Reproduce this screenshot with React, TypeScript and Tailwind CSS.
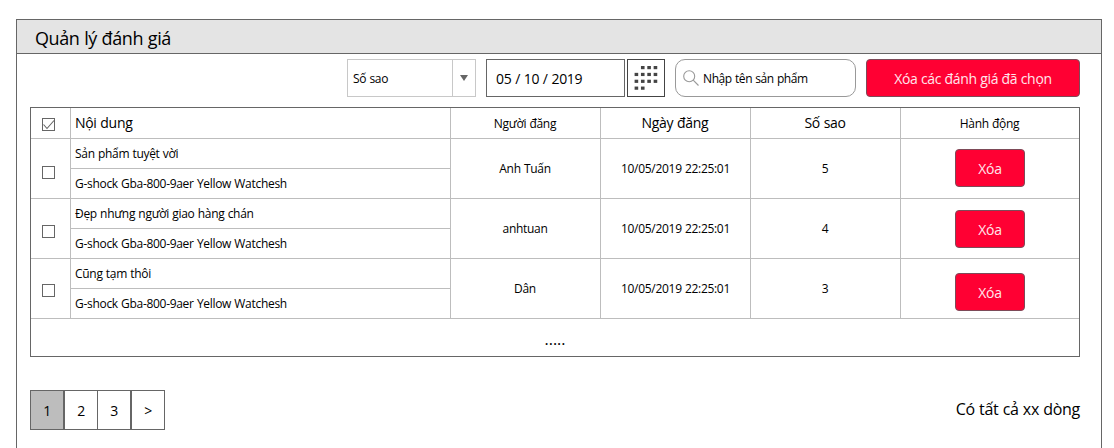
import React from "react";

function Checkbox({ checked, className }: { checked?: boolean; className: string }) {
  return (
    <svg viewBox="0 0 13 13" className={`ml-[11px] block h-[13px] w-[13px] shrink-0 ${className}`} role="checkbox" aria-checked={!!checked}>
      <rect x=".5" y=".5" width="12" height="12" fill="#fff" stroke="#666" />
      {checked && <path d="M1.5 6.5 5 10.5 12 2.5" fill="none" stroke="#666" strokeWidth="1.1" />}
    </svg>
  );
}

const rows = [
  { text: "Sản phẩm tuyệt vời", user: "Anh Tuấn", stars: 5, box: "mt-[27px]", btn: "mt-[10px]" },
  { text: "Đẹp nhưng người giao hàng chán", user: "anhtuan", stars: 4, box: "mt-[26px]", btn: "mt-[11px]" },
  { text: "Cũng tạm thôi", user: "Dân", stars: 3, box: "mt-[25px]", btn: "mt-[14px]" },
];

const dots = [
  [1, 0], [2, 0], [3, 0],
  [0, 1], [1, 1], [2, 1], [3, 1],
  [0, 2], [1, 2], [2, 2], [3, 2],
  [0, 3], [1, 3],
];

const grid = "grid grid-cols-[40px_380px_150px_150px_150px_178px]";
const cell = "flex items-center justify-center border-r border-[#bdbdbd]";
const redButton = "flex h-[38px] items-center justify-center rounded-[4px] border border-[#7d4a58] bg-[#ff0033] pt-[2px] text-[#ffe6eb]";

export default function App() {
  return (
    <main className="h-[448px] overflow-hidden bg-white pl-4 pt-[19px] font-['Open_Sans','Noto_Sans',sans-serif] text-xs tracking-[-0.3px] whitespace-nowrap text-black [word-spacing:0.4px]">
      <section className="h-[460px] w-[1086px] border border-[#666]">
        <header className="flex h-[34px] items-center border-b border-[#666] bg-[#e4e4e4] pl-[18px] pt-[2px]">
          <h1 className="text-[18px] tracking-[-0.4px]">Quản lý đánh giá</h1>
        </header>

        <div className="ml-[13px] mt-[5px] flex w-[1050px] justify-end">
          <div className="flex h-[38px] w-[129px] border border-[#c8c8c8]">
            <div className="flex flex-1 items-center border-r border-[#c8c8c8] pl-[5px] pt-[2px]">Số sao</div>
            <div className="flex w-[22px] items-center justify-center">
              <svg viewBox="0 0 8 6" className="h-[6px] w-[8px]"><path d="M0 0H8L4 6Z" fill="#666" /></svg>
            </div>
          </div>
          <div className="ml-[10px] flex h-[38px] w-[139px] items-center border border-[#666] pl-[9px] pt-[2px]">
            <span className="text-[14px]">05 / 10 / 2019</span>
          </div>
          <button className="ml-[2px] h-[38px] w-[38px] border border-[#444]" aria-label="Lịch">
            <svg viewBox="0 0 36 36" className="block h-9 w-9">
              {dots.map(([c, r]) => <rect key={`${c}-${r}`} x={6.6 + c * 6.35} y={6 + r * 6.85} width="3.6" height="3.2" fill="#444" />)}
            </svg>
          </button>
          <div className="ml-[10px] flex h-[38px] w-[181px] items-center rounded-[10px] border border-[#999] pl-[7px]">
            <svg viewBox="0 0 16 16" className="h-4 w-4" fill="none" stroke="#999" strokeWidth="1.1">
              <circle cx="6.2" cy="6.2" r="5.5" /><path d="m10.2 10.2 5.3 5.3" />
            </svg>
            <span className="ml-[4px] pt-[2px] tracking-[-0.4px]">Nhập tên sản phẩm</span>
          </div>
          <button className={`${redButton} ml-[10px] w-[214px]`}>
            <span className="text-[14px]">Xóa các đánh giá đã chọn</span>
          </button>
        </div>

        <div className="ml-[13px] mt-[10px] h-[250px] w-[1050px] border border-[#666]">
          <div className={`${grid} h-[31px] border-b border-[#bdbdbd]`}>
            <div className="border-r border-[#bdbdbd]"><Checkbox checked className="mt-[10px]" /></div>
            <div className="flex items-center border-r border-[#bdbdbd] pl-[4px] pt-px"><span className="text-[14px]">Nội dung</span></div>
            <div className={`${cell} pr-px pt-px`}>Người đăng</div>
            <div className={`${cell} pr-px pt-px`}><span className="text-[14px]">Ngày đăng</span></div>
            <div className={`${cell} pr-px pt-px`}><span className="text-[14px]">Số sao</span></div>
            <div className="flex items-center justify-center pt-px pr-px">Hành động</div>
          </div>
          {rows.map((r) => (
            <div key={r.text} className={`${grid} h-[60px] border-b border-[#bdbdbd]`}>
              <div className="border-r border-[#bdbdbd]"><Checkbox className={r.box} /></div>
              <div className="flex flex-col border-r border-[#bdbdbd]">
                <div className="flex h-[30px] items-center border-b border-[#bdbdbd] pl-[4px]">{r.text}</div>
                <div className="flex h-[29px] items-center pl-[4px]">G-shock Gba-800-9aer Yellow Watchesh</div>
              </div>
              <div className={`${cell} pr-px`}>{r.user}</div>
              <div className={cell}>10/05/2019 22:25:01</div>
              <div className={`${cell} pr-px`}>{r.stars}</div>
              <div className="flex justify-center">
                <button className={`${redButton} w-[70px] ${r.btn}`}><span className="text-[14px]">Xóa</span></button>
              </div>
            </div>
          ))}
          <div className="flex h-[37px] items-center justify-center pt-[5px]"><span className="text-[16px] tracking-normal">.....</span></div>
        </div>

        <footer className="ml-[13px] mt-[33px] flex w-[1050px] items-center justify-between">
          <nav className="flex text-[14px]">
            <button className="h-10 w-[34px] border border-[#666] bg-[#bdbdbd] pt-[2px]">1</button>
            <button className="h-10 w-[34px] border border-[#666] pt-[2px]">2</button>
            <button className="-ml-px h-10 w-[34px] border border-[#666] pt-[2px]">3</button>
            <button className="h-10 w-[34px] border border-[#666] pt-[2px]">&gt;</button>
          </nav>
          <span className="text-[16px]">Có tất cả xx dòng</span>
        </footer>
      </section>
    </main>
  );
}
